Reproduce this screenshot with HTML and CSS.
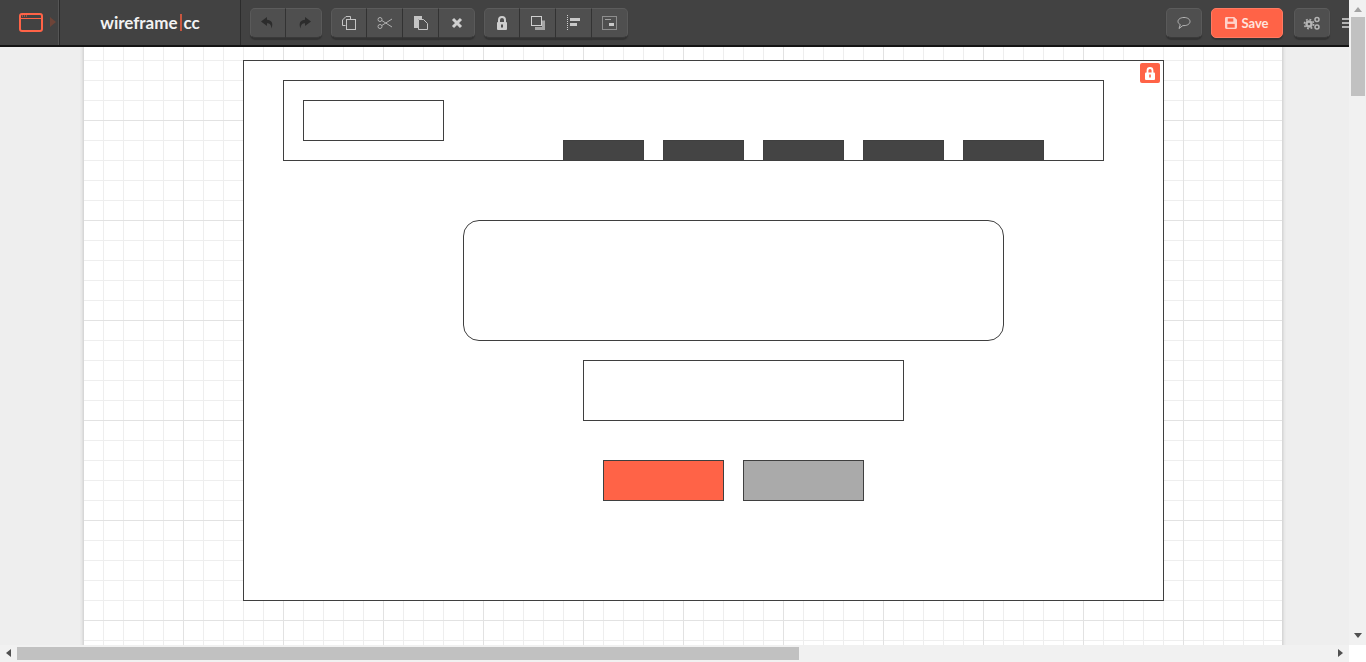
FILE: index.html
```html
<!DOCTYPE html>
<html lang="en">
<head>
<meta charset="utf-8">
<title>wireframe.cc</title>
<link rel="stylesheet" href="styles.css">
</head>
<body>
<div class="app">
  <div class="main">
    <header class="toolbar">
      <div class="stencil">
        <svg class="ic-window" width="24" height="19" viewBox="0 0 24 19"><rect x="1" y="1" width="22" height="17" rx="2" fill="none" stroke="#ff6347" stroke-width="2"/><path d="M1 5.500h22" stroke="#ff6347" stroke-width="1"/><path d="M3 3h1M5 3h1M7 3h1" stroke="#ff6347" stroke-width="1"/></svg>
        <span class="caret"></span>
      </div>
      <div class="logo"><span>wireframe</span><i class="pipe"></i><span>cc</span></div>
      <div class="tools">
        <div class="group">
          <button class="btn"><svg width="16" height="14" viewBox="0 0 16 14"><path d="M7 1 1 5.500 7 10V7.200c2.600 0 4 .8 4.500 5.300 2.200-5.500-.2-8.500-4.500-8.700z" fill="#2c2c2c"/></svg></button>
          <button class="btn"><svg width="16" height="14" viewBox="0 0 16 14"><path d="M9 1l6 4.500L9 10V7.200c-2.600 0-4 .8-4.500 5.300C2.300 7 4.700 4 9 3.800z" fill="#2c2c2c"/></svg></button>
        </div>
        <div class="group">
          <button class="btn"><svg width="16" height="16" viewBox="0 0 16 16" fill="none" stroke="#c4c4c4"><path d="M4.500 10.500H1.500V5L5 1.500H9.500V4.500"/><rect x="5.500" y="4.500" width="9" height="10"/></svg></button>
          <button class="btn"><svg width="16" height="14" viewBox="0 0 16 14" fill="none" stroke="#b0b0b0"><circle cx="3" cy="3.500" r="2"/><circle cx="3" cy="10.500" r="2"/><path d="M4.800 4.500 15 11M4.800 9.500 15 3"/></svg></button>
          <button class="btn"><svg width="16" height="16" viewBox="0 0 16 16"><path d="M1 1h8v3H5v9H1z" fill="#c4c4c4"/><path d="M5.500 4.500h5l4 4v6h-9z" fill="#4f4f4f" stroke="#c4c4c4"/></svg></button>
          <button class="btn"><svg width="12" height="12" viewBox="0 0 12 12"><path d="M2 2l8 8M10 2l-8 8" stroke="#cfcfcf" stroke-width="3"/></svg></button>
        </div>
        <div class="group">
          <button class="btn"><svg width="12" height="14" viewBox="0 0 12 14"><path d="M3 6V4a3 3 0 0 1 6 0v2" fill="none" stroke="#cfcfcf" stroke-width="2"/><rect x="1" y="6" width="10" height="8" rx="1" fill="#cfcfcf"/><rect x="5" y="8.500" width="2" height="3" fill="#4f4f4f"/></svg></button>
          <button class="btn"><svg width="16" height="16" viewBox="0 0 16 16"><path d="M12 5.500h3v9.500H5v-3h7z" fill="#a5a5a5"/><rect x="1.500" y="1.500" width="10" height="9" fill="none" stroke="#cfcfcf"/></svg></button>
          <button class="btn"><svg width="14" height="16" viewBox="0 0 14 16"><path d="M.5 0v16" stroke="#cfcfcf" stroke-dasharray="1 1"/><rect x="3" y="3" width="10" height="3" fill="#c8c8c8"/><rect x="3" y="8" width="7" height="3" fill="#c8c8c8"/></svg></button>
          <button class="btn"><svg width="15" height="14" viewBox="0 0 15 14"><rect x=".5" y=".5" width="14" height="13" fill="none" stroke="#cfcfcf" stroke-dasharray="1 1"/><rect x="3" y="3" width="6" height="1" fill="#a0a0a0"/><rect x="7" y="7" width="5" height="3" fill="#c8c8c8"/></svg></button>
        </div>
      </div>
      <div class="actions">
        <button class="btn solo"><svg width="16" height="14" viewBox="0 0 16 14"><path d="M8 1.500C4.500 1.500 2 3.200 2 5.500c0 1.400 1 2.500 2.300 3.100L3 12.500l3.800-2.900H8c3.500 0 6-1.800 6-4.100S11.500 1.500 8 1.500z" fill="none" stroke="#b5b5b5"/></svg></button>
        <button class="btn save"><svg width="12" height="12" viewBox="0 0 13 13"><path d="M0 1.500A1.500 1.500 0 0 1 1.500 0H10l3 3v8.500a1.500 1.500 0 0 1-1.500 1.500h-10A1.500 1.500 0 0 1 0 11.500z" fill="#ffd2ca"/><rect x="3" y="1.500" width="6" height="3.500" fill="#ff6347"/><rect x="2.500" y="7.500" width="8" height="4" fill="#ff6347"/></svg><span>Save</span></button>
        <button class="btn solo"><svg width="18" height="14" viewBox="0 0 18 14" fill="none" stroke="#b5b5b5"><circle cx="6" cy="8" r="2.500" stroke-width="2.400"/><circle cx="6" cy="8" r="4.600" stroke-width="1.600" stroke-dasharray="1.800 1.800"/><circle cx="14" cy="3.500" r="2" stroke-width="1.500"/><circle cx="14" cy="11" r="2" stroke-width="1.500"/></svg></button>
        <div class="menu"><b></b><b></b><b></b></div>
      </div>
    </header>
    <div class="workspace">
      <div class="canvas">
        <div class="node frame"></div>
        <div class="node lockbadge"><svg width="10" height="13" viewBox="0 0 10 13"><path d="M2.500 6V3.500a2.500 2.500 0 0 1 5 0V6" fill="none" stroke="#fff" stroke-width="1.800"/><rect y="5.500" width="10" height="7.500" rx="1" fill="#fff"/><rect x="4.200" y="7.500" width="1.600" height="3" fill="#ff6347"/></svg></div>
        <div class="node header"></div>
        <div class="node brand"></div>
        <div class="node tab t1"></div>
        <div class="node tab t2"></div>
        <div class="node tab t3"></div>
        <div class="node tab t4"></div>
        <div class="node tab t5"></div>
        <div class="node hero"></div>
        <div class="node field"></div>
        <div class="node primary"></div>
        <div class="node secondary"></div>
      </div>
    </div>
    <div class="hscroll">
      <span class="arrow left"></span>
      <div class="hthumb"></div>
      <span class="arrow right"></span>
    </div>
  </div>
  <div class="vscroll">
    <span class="arrow up"></span>
    <div class="vthumb"></div>
    <span class="arrow down"></span>
  </div>
</div>
</body>
</html>
```
FILE: styles.css
```css
* { box-sizing: border-box; }
html, body { margin: 0; height: 100%; overflow: hidden; }
body { font-family: "Lato", "Liberation Sans", sans-serif; background: #fff; }
.app { display: flex; width: 1366px; height: 662px; }
.main { flex: 1; min-width: 0; display: flex; flex-direction: column; }

.toolbar { height: 47px; flex: none; display: flex; align-items: stretch; background: #424242; border-bottom: 2px solid #141414; overflow: hidden; }
.stencil { width: 60px; flex: none; display: flex; align-items: center; padding: 0 0 1px 19px; gap: 7px; border-right: 1px solid #2c2c2c; box-shadow: inset -2px 0 0 -1px #555; }
.caret { width: 0; height: 0; border-left: 6px solid #6e4438; border-top: 5px solid transparent; border-bottom: 5px solid transparent; }
.logo { width: 181px; flex: none; display: flex; align-items: center; justify-content: center; color: #f2f2f2; font-weight: 700; font-size: 17px; border-right: 1px solid #2c2c2c; padding: 0 0 1px 0; }
.pipe { width: 2px; height: 17px; background: #c7563f; margin: 0 2px; }
.tools { display: flex; gap: 9px; padding: 8px 0 0 9px; }
.group { display: flex; height: 30px; }
.btn { flex: none; height: 30px; width: 36px; padding: 0; display: flex; align-items: center; justify-content: center; gap: 4px; background: #4f4f4f; border: 1px solid #333; border-left-width: 0; border-top-color: #5c5c5c; border-bottom-color: #3a3a3a; box-shadow: 0 2px 1px #333; }
.group .btn:first-child { border-left: 1px solid #5a5a5a; border-radius: 5px 0 0 5px; }
.group .btn:last-child { border-right-color: #5a5a5a; border-radius: 0 5px 5px 0; }
.actions { margin-left: auto; display: flex; align-items: flex-start; padding-top: 8px; width: 183px; flex: none; }
.btn.solo { width: 36px; border-left: 1px solid #5a5a5a; border-right-color: #5a5a5a; border-radius: 5px; }
.btn.save { width: 72px; margin: 0 11px 0 9px; background: #ff6347; border: 1px solid #ff7a62; border-radius: 5px; color: #ffe3dd; font: 700 13px "Lato", "Liberation Sans", sans-serif; box-shadow: 0 2px 1px #333; }
.menu { flex: none; display: flex; flex-direction: column; gap: 2px; margin-left: 12px; padding-top: 10px; }
.menu b { display: block; width: 10px; height: 2px; background: #b5b5b5; }

.workspace { flex: 1; min-height: 0; overflow: hidden; background: #eee; padding-left: 84px; }
.canvas { position: relative; width: 1198px; height: 700px; background-color: #fff;
  background-image:
    linear-gradient(#e2e2e2 1px, transparent 1px),
    linear-gradient(90deg, #e2e2e2 1px, transparent 1px),
    linear-gradient(#eee 1px, transparent 1px),
    linear-gradient(90deg, #eee 1px, transparent 1px);
  background-size: 100px 100px, 100px 100px, 20px 20px, 20px 20px;
  background-position: 0 73px, 99px 0, 0 13px, 19px 0;
  box-shadow: 0 0 3px 1px #c8c8c8;
}
.node { position: absolute; border: 1px solid #3f3f3f; }
.frame { left: 159px; top: 13px; width: 921px; height: 541px; background: #fff; }
.lockbadge { left: 1056px; top: 16px; width: 20px; height: 20px; background: #ff6347; border: 0; border-radius: 2px; display: flex; align-items: center; justify-content: center; }
.header { left: 199px; top: 33px; width: 821px; height: 81px; background: #fff; }
.brand { left: 219px; top: 53px; width: 141px; height: 41px; background: #fff; }
.tab { top: 93px; width: 81px; height: 21px; background: #444; }
.t1 { left: 479px; } .t2 { left: 579px; } .t3 { left: 679px; } .t4 { left: 779px; } .t5 { left: 879px; }
.hero { left: 379px; top: 173px; width: 541px; height: 121px; background: #fff; border-radius: 16px; }
.field { left: 499px; top: 313px; width: 321px; height: 61px; background: #fff; }
.primary { left: 519px; top: 413px; width: 121px; height: 41px; background: #ff6347; }
.secondary { left: 659px; top: 413px; width: 121px; height: 41px; background: #aaa; }

.hscroll { height: 17px; flex: none; display: flex; align-items: center; position: relative; background: #f1f1f1; padding-left: 17px; }
.hthumb { width: 782px; height: 13px; background: #c1c1c1; }
.vscroll { width: 17px; flex: none; display: flex; flex-direction: column; align-items: flex-start; position: relative; background: #f1f1f1; height: 645px; padding: 17px 0 0 2px; }
.vthumb { width: 14px; height: 79px; background: #c1c1c1; }
.arrow { position: absolute; width: 0; height: 0; }
.arrow.left { left: 6px; top: 4px; border-right: 5px solid #505050; border-top: 4px solid transparent; border-bottom: 4px solid transparent; }
.arrow.right { right: 6px; top: 4px; border-left: 5px solid #505050; border-top: 4px solid transparent; border-bottom: 4px solid transparent; }
.arrow.up { top: 7px; left: 5px; border-bottom: 5px solid #a3a3a3; border-left: 4px solid transparent; border-right: 4px solid transparent; }
.arrow.down { bottom: 7px; left: 5px; border-top: 5px solid #505050; border-left: 4px solid transparent; border-right: 4px solid transparent; }
```
